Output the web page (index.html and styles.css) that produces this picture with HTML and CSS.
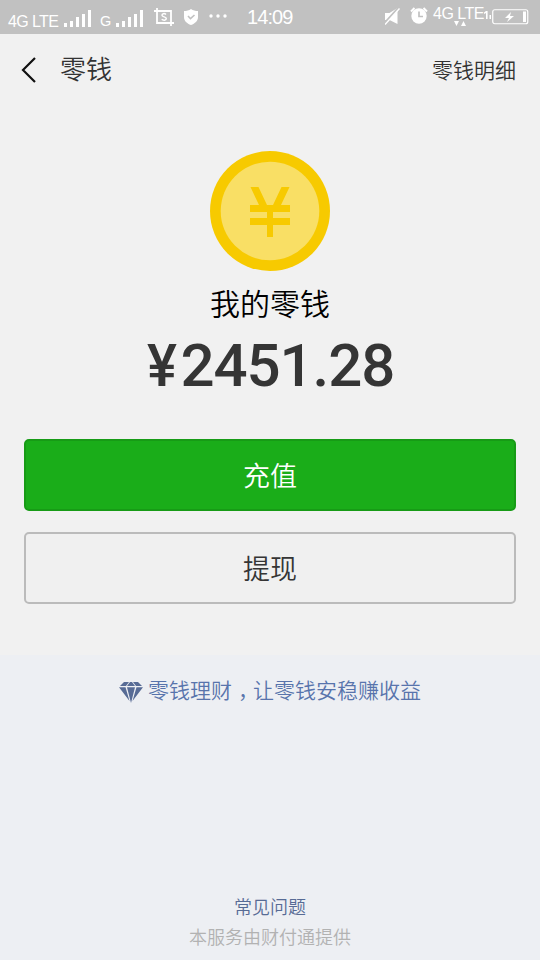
FILE: index.html
```html
<!DOCTYPE html>
<html lang="zh-CN">
<head>
<meta charset="utf-8">
<title>零钱</title>
<link rel="stylesheet" href="styles.css">
</head>
<body>
<div class="screen">
  <div class="status">
    <div class="status-left">
      <span class="net">4G LTE</span>
      <svg class="bars" width="27" height="17" viewBox="0 0 27 17" fill="#fff"><path d="M0 13h3v4H0zM6 11h3v6H6zM12 7h3v10h-3zM18 4h3v13h-3zM24 0h3v17h-3z"/></svg>
      <span class="net-g">G</span>
      <svg class="bars" width="27" height="17" viewBox="0 0 27 17" fill="#fff"><path d="M0 13h3v4H0zM6 11h3v6H6zM12 7h3v10h-3zM18 4h3v13h-3zM24 0h3v17h-3z"/></svg>
      <svg class="shot" width="20" height="18" viewBox="0 0 20 18" fill="none" stroke="#fff"><path stroke-width="1.8" d="M0 3h17v15M3 0v15h17"/><path stroke-width="1.5" d="M12 6.500C10.500 5 8 5.500 8 7.200c0 2 4.300 1.400 4.300 3.400 0 1.900-3 2.100-4.600.7"/></svg>
      <svg class="shield" width="14" height="16" viewBox="0 0 14 16"><path fill="#fff" d="M7 0c2 1.500 4.500 2 7 2v6c0 4-3 6.500-7 8-4-1.500-7-4-7-8V2c2.500 0 5-.5 7-2z"/><path fill="none" stroke="#c1c1c1" stroke-width="1.600" d="M4 7l2.500 2.700L10.500 6"/></svg>
      <svg class="dots" width="18" height="4" viewBox="0 0 18 4" fill="#fff"><circle cx="2" cy="2" r="1.700"/><circle cx="9" cy="2" r="1.700"/><circle cx="16" cy="2" r="1.700"/></svg>
    </div>
    <span class="clock">14:09</span>
    <div class="status-right">
      <svg class="mute" width="16" height="17" viewBox="0 0 16 17"><path fill="#fff" d="M0 5h4.500L12.500 0v16l-8-4H0z"/><path stroke="#c1c1c1" stroke-width="2.500" d="M-1 16L13.500 0"/><path stroke="#fff" stroke-width="1.400" d="M0 16.500L14.500.5"/></svg>
      <svg class="alarm" width="18" height="17" viewBox="0 0 18 17"><circle cx="9" cy="9" r="7.700" fill="#fff"/><path fill="none" stroke="#fff" stroke-width="2" d="M1 4.500L4.500 1M17 4.500L13.500 1"/><path fill="none" stroke="#c1c1c1" stroke-width="1.700" d="M9 4.500v5h4"/></svg>
      <div class="lte">
        <span>4G LTE</span>
        <svg width="12" height="5" viewBox="0 0 12 5" fill="#fff"><path d="M0 0h5L2.500 5zM7 5h5L9.500 0z"/></svg>
      </div>
      <svg class="sim" width="8" height="8" viewBox="0 0 8 8" fill="#fff"><path d="M2 0h1.600v8H2V2L0 3V1.500zM5.500 4H7v4H5.500z"/></svg>
      <svg class="battery" width="37" height="16" viewBox="0 0 37 16"><rect x=".75" y=".75" width="35" height="14" rx="2" fill="none" stroke="#fff" stroke-width="1.200"/><path fill="#fff" d="M31 2.500h3v10.500h-3zM19 3l-6 6h4l-2 4 7-6h-4z"/></svg>
    </div>
  </div>

  <header class="nav">
    <svg class="back" width="16" height="26" viewBox="0 0 16 26" fill="none" stroke="#111" stroke-width="2.200"><path d="M14 1L2 13l12 12"/></svg>
    <h1>零钱</h1>
    <a class="detail">零钱明细</a>
  </header>

  <main class="wallet">
    <svg class="coin" width="120" height="120" viewBox="0 0 120 120"><circle cx="60" cy="60" r="60" fill="#f7ca00"/><circle cx="60" cy="60" r="49.300" fill="#f9df65"/><path fill="#f7ca00" d="M40.500 36h8l8.500 18h6l8.500-18h8L71 54h9v7H63v6h17v7H63v12h-6V74H40v-7h17v-6H40v-7h9z"/></svg>
    <div class="label">我的零钱</div>
    <div class="amount"><span class="yen">¥</span>2451.28</div>
    <button class="btn primary">充值</button>
    <button class="btn plain">提现</button>
  </main>

  <section class="bottom">
    <a class="promo">
      <svg width="24" height="21" viewBox="0 0 24 21" fill="#576b95"><path d="M5 0h5L7 4H1zM11 0h2l3 4H8zM14 0h5l4 4h-6zM0 5.300h6.500L10.500 19zM8 5.300h8L12 21zM17.500 5.300H24L13.500 19z"/></svg>
      <span>零钱理财<span class="comma">，</span>让零钱安稳赚收益</span>
    </a>
    <footer>
      <a class="faq">常见问题</a>
      <div class="provider">本服务由财付通提供</div>
    </footer>
  </section>
</div>
</body>
</html>
```

FILE: styles.css
```css
* { box-sizing: border-box; }

body {
  margin: 0;
  font-family: "Noto Sans CJK SC", sans-serif;
  font-weight: 350;
}

.screen {
  width: 540px;
  height: 960px;
  display: flex;
  flex-direction: column;
  overflow: hidden;
  background: #f1f1f1;
}

svg { display: block; flex: none; }

.status {
  height: 34px;
  flex: none;
  display: flex;
  background: #c1c1c1;
  color: #fff;
  font-family: "Liberation Sans", sans-serif;
  font-weight: 400;
  white-space: nowrap;
}

.status-left {
  width: 247px;
  padding-left: 8px;
  display: flex;
  align-items: flex-start;
}

.net { width: 56px; margin-top: 13px; font-size: 16px; line-height: 18px; letter-spacing: -0.6px; }
.bars { margin-top: 10px; }
.net-g { width: 16px; margin: 12px 0 0 9px; font-size: 14.5px; line-height: 18px; }
.shot { margin: 8px 0 0 11px; }
.shield { margin: 9px 0 0 10px; }
.dots { margin: 14px 0 0 11px; }

.clock { width: 138px; font-size: 20px; line-height: 35px; letter-spacing: -0.9px; }

.status-right { display: flex; align-items: flex-start; }
.mute { margin-top: 8px; }
.alarm { margin: 7px 0 0 9px; }
.lte { width: 51px; margin: 5px 0 0 5px; font-size: 16px; line-height: 18px; letter-spacing: -0.5px; }
.lte span { display: block; }
.lte svg { margin: -2px 0 0 21px; }
.sim { margin-top: 11px; }
.battery { margin: 9px 0 0; }

.nav {
  height: 72px;
  flex: none;
  display: flex;
  align-items: center;
  padding: 0 24px 0 21px;
}

.nav h1 {
  flex: 1;
  margin: 0 0 4px 23px;
  color: #333;
  font-size: 26px;
  font-weight: 350;
  line-height: 36px;
}

.detail { margin-bottom: 2px; color: #333; font-size: 21px; line-height: 30px; }

.wallet {
  height: 549px;
  flex: none;
  display: flex;
  flex-direction: column;
  align-items: center;
  padding: 45px 24px 0;
}

.label { margin-top: 11px; color: #000; font-size: 30px; line-height: 40px; }

.amount {
  margin-top: 14px;
  color: #353535;
  font-family: Roboto, sans-serif;
  font-size: 60px;
  font-weight: 500;
  line-height: 60px;
  letter-spacing: -1.1px;
}

.yen {
  display: inline-block;
  margin-right: 4px;
  transform: scaleX(0.94);
}

.btn {
  width: 100%;
  height: 72px;
  flex: none;
  border: 2px solid;
  border-radius: 5px;
  padding: 0 0 2px;
  font-family: inherit;
  font-size: 27px;
  font-weight: 350;
}

.primary { margin-top: 43px; border-color: #179b16; background: #1aad19; color: #fff; }
.plain { margin-top: 21px; border-color: #bbb; background: #f0f0f0; color: #353535; }

.bottom {
  flex: 1;
  display: flex;
  flex-direction: column;
  justify-content: space-between;
  background: #edeff3;
}

.promo {
  display: flex;
  justify-content: center;
  gap: 5px;
  padding-top: 19px;
  color: #5874ac;
  font-size: 21px;
  line-height: 30px;
}

.promo svg { margin-top: 8px; }

/* Half-width comma centred in a full-width cell */
.comma {
  display: inline-block;
  width: 21px;
  padding-left: 6px;
  font-feature-settings: "halt";
}

footer { padding-bottom: 9px; text-align: center; font-size: 18px; line-height: 30px; }
.faq { color: #576b95; }
.provider { color: #b2b2b2; }
```
